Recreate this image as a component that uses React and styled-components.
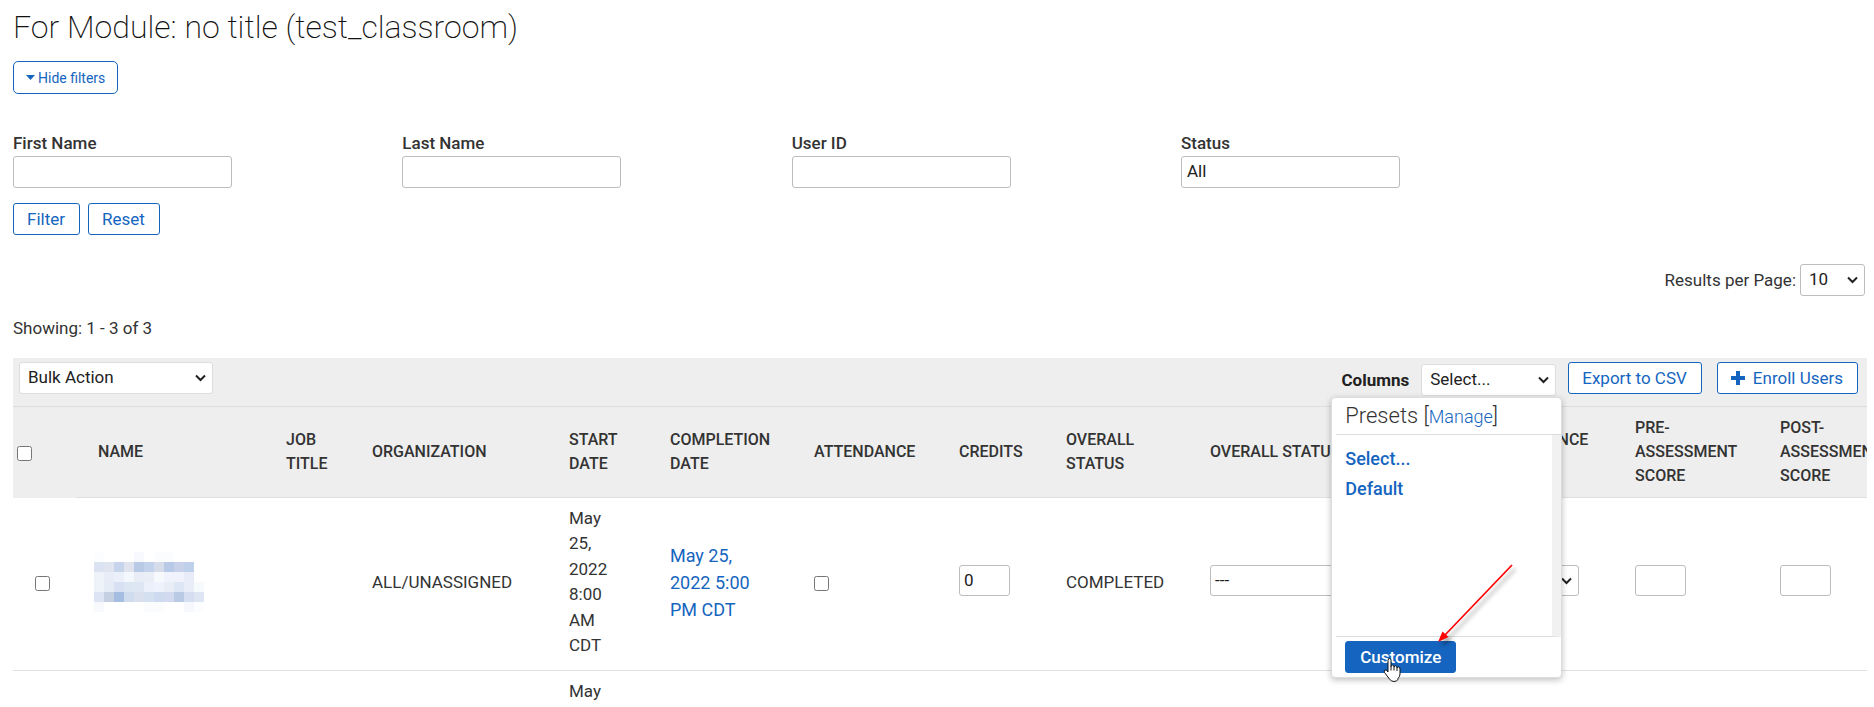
import React, { useState } from 'react'
import styled, { createGlobalStyle } from 'styled-components'

const blue = '#1565c0'

const GlobalStyle = createGlobalStyle`
  * {
    box-sizing: border-box;
  }

  body {
    margin: 0;
    background: #fff;
    color: #333;
    font-family: Roboto, sans-serif;
    font-size: 17px;
    line-height: 24px;
    overflow: hidden;
  }

  input, select, button {
    font-family: inherit;
    font-size: 17px;
    color: #212121;
  }
`

// shades of the blurred out learner name, one string for every block
const redacted = [
  ['#fcfdfe', '', '', '', '#f7f9fe', '', '#fbfcfe', '#fbfcfe', '', '', ''],
  ['#dbe3f3', '#dfe4f0', '#c6d5ec', '#e0e3ed', '#b8cae5', '#c2d2eb', '#d7dceb', '#b8cae7', '#c7d1ea', '#bfd0ea', ''],
  ['#eff2f8', '#e8ecf6', '#ebeff9', '#f3f8fc', '#e8edf6', '#eaeef7', '#f7f9fd', '#f0f3fb', '#f0f3fb', '#e8ebf8', ''],
  ['#edf3f9', '#e5ecf5', '#d7e1f3', '#dce6f2', '#dde6f2', '#ebf0fb', '#eef2fc', '#e9edf6', '#dce6f4', '#e9edf8', '#f6fafd'],
  ['#dde4f3', '#c5d0e2', '#a4bde0', '#cfdcee', '#dae0ee', '#d4dff0', '#cddaef', '#d1daee', '#b9cae5', '#d6dff1', '#dee5f3'],
  ['#f8f9fd', '', '', '', '', '#fbfcfe', '#fbfcfe', '', '', '#f7f8fd', '#fcfdfe'],
]

const columns = [
  { label: 'Name', width: 210, inset: true },
  { label: 'Job Title', width: 86 },
  { label: 'Organization', width: 197 },
  { label: 'Start Date', width: 101 },
  { label: 'Completion Date', width: 144 },
  { label: 'Attendance', width: 145 },
  { label: 'Credits', width: 107 },
  { label: 'Overall Status', width: 144 },
  { label: 'Overall Status', width: 277, wide: true },
  { label: 'Attendance Status', width: 148 },
  { label: 'Pre-Assessment Score', width: 145 },
  { label: 'Post-Assessment Score', width: 145 },
]

function App() {
  const [showFilters, setShowFilters] = useState(true)

  return (
    <Page>
      <GlobalStyle />
      <Title>For Module: no title (test_classroom)</Title>

      <ToggleButton type="button" onClick={() => setShowFilters(!showFilters)}>
        <Caret />
        {showFilters ? 'Hide filters' : 'Show filters'}
      </ToggleButton>

      {showFilters && (
        <Filters onSubmit={(e) => e.preventDefault()}>
          <Fields>
            <Field>
              <label htmlFor="first-name">First Name</label>
              <input id="first-name" type="text" />
            </Field>
            <Field>
              <label htmlFor="last-name">Last Name</label>
              <input id="last-name" type="text" />
            </Field>
            <Field>
              <label htmlFor="user-id">User ID</label>
              <input id="user-id" type="text" />
            </Field>
            <Field>
              <label htmlFor="status">Status</label>
              <select id="status">
                <option>All</option>
              </select>
            </Field>
          </Fields>
          <FilterButtons>
            <Button type="submit">Filter</Button>
            <Button type="reset">Reset</Button>
          </FilterButtons>
        </Filters>
      )}

      <PerPage>
        <label htmlFor="per-page">Results per Page:</label>
        <SelectBox $width="65px">
          <select id="per-page" defaultValue="10">
            <option>10</option>
            <option>25</option>
          </select>
          <Chevron />
        </SelectBox>
      </PerPage>

      <Showing>Showing: 1 - 3 of 3</Showing>

      <TablePanel>
        <Toolbar>
          <SelectBox $width="194px" $light>
            <select aria-label="Bulk Action">
              <option>Bulk Action</option>
            </select>
            <Chevron />
          </SelectBox>
          <Tools>
            <ColumnsPicker>
              <label htmlFor="columns">Columns</label>
              <SelectBox $width="135px" $light>
                <select id="columns">
                  <option>Select...</option>
                </select>
                <Chevron />
              </SelectBox>
              <PresetsMenu />
            </ColumnsPicker>
            <ButtonGroup>
              <Button type="button">Export to CSV</Button>
              <Button type="button">
                <PlusIcon />
                Enroll Users
              </Button>
            </ButtonGroup>
          </Tools>
        </Toolbar>

        <TableClip>
          <Table>
            <colgroup>
              <Col $width={63} />
              {columns.map((c, i) => <Col key={i} $width={c.width} />)}
            </colgroup>
            <thead>
              <tr>
                <HeadCheck><Checkbox type="checkbox" aria-label="Select all" /></HeadCheck>
                {columns.map((c, i) => <Th key={i} $wide={c.wide} $inset={c.inset}>{c.label}</Th>)}
              </tr>
            </thead>
            <tbody>
              <Row />
              <Row />
            </tbody>
          </Table>
        </TableClip>
      </TablePanel>
    </Page>
  )
}

export default App

function Row() {
  return (
    <tr>
      <CheckCell><Checkbox type="checkbox" aria-label="Select user" /></CheckCell>
      <NameCell><RedactedName /></NameCell>
      <Td />
      <Td>ALL/UNASSIGNED</Td>
      <DateCell>May 25, 2022 8:00 AM CDT</DateCell>
      <CompletionCell><a href="#completion">May 25, 2022 5:00 PM CDT</a></CompletionCell>
      <Td><Checkbox type="checkbox" aria-label="Attendance" /></Td>
      <InputCell><ScoreInput aria-label="Credits" defaultValue="0" /></InputCell>
      <Td>COMPLETED</Td>
      <InputCell>
        <SelectBox $width="250px" $tight>
          <select aria-label="Overall status">
            <option>---</option>
          </select>
          <Chevron />
        </SelectBox>
      </InputCell>
      <InputCell>
        <SelectBox $width="92px" $tight>
          <select aria-label="Attendance status">
            <option>---</option>
          </select>
          <Chevron />
        </SelectBox>
      </InputCell>
      <InputCell><ScoreInput aria-label="Pre-assessment score" /></InputCell>
      <InputCell><ScoreInput aria-label="Post-assessment score" /></InputCell>
    </tr>
  )
}

function PresetsMenu() {
  return (
    <Menu>
      <MenuTitle>
        Presets [<a href="#manage">Manage</a>]
      </MenuTitle>
      <MenuList>
        <li><a href="#select">Select...</a></li>
        <li><a href="#default">Default</a></li>
      </MenuList>
      <MenuFooter>
        <PrimaryButton type="button">Customize</PrimaryButton>
      </MenuFooter>
      <Pointer />
      <HandCursor />
    </Menu>
  )
}

function RedactedName() {
  return (
    <Blocks>
      {redacted.flat().map((shade, i) => <Block key={i} $shade={shade} />)}
    </Blocks>
  )
}

function Chevron() {
  return (
    <svg width="11" height="8" viewBox="0 0 11 8" aria-hidden="true">
      <path d="M1 1.5 L5.5 6 L10 1.5" fill="none" stroke="#212121" strokeWidth="2" />
    </svg>
  )
}

function Caret() {
  return (
    <svg width="9" height="5" viewBox="0 0 9 5" aria-hidden="true">
      <path d="M0 0 H9 L4.5 5 Z" fill={blue} />
    </svg>
  )
}

function PlusIcon() {
  return (
    <svg width="14" height="14" viewBox="0 0 14 14" aria-hidden="true">
      <path d="M5 0 H9 V5 H14 V9 H9 V14 H5 V9 H0 V5 H5 Z" fill={blue} />
    </svg>
  )
}

function Pointer() {
  return (
    <Arrow width="92" height="92" viewBox="0 0 92 92" aria-hidden="true">
      <path d="M79 5 L12 75" stroke="#f00" strokeWidth="1.7" />
      <path d="M5 82 L9.500 71.500 L15.500 77 Z" fill="#f00" />
    </Arrow>
  )
}

function HandCursor() {
  return (
    <Hand width="18" height="24" viewBox="0 0 18 24" aria-hidden="true">
      <path
        d="M5 14 V2.500 Q5 .5 6.500 .5 Q8 .5 8 2.500 V8.500 Q8.200 7 9.500 7 Q11 7 11 9 Q11.300 7.800 12.500 7.800 Q14 7.800 14 10 Q14.300 9 15.500 9 Q17 9.200 17 11 V16 Q17 18.500 15 20.500 V21.500 Q13.500 23.500 11 23.500 Q8 23.500 6.500 21 L1.500 14.500 Q.5 12.500 2 12 Q3.500 11.500 5 14 Z"
        fill="#fff"
        stroke="#111"
      />
      <path d="M8 8 V12.500 M11 9 V12.500 M14 10 V13" stroke="#111" />
    </Hand>
  )
}

const Page = styled.main`
  padding: 8px 7px 0 13px;
`

const Title = styled.h1`
  margin: 0;
  color: #111;
  font-size: 32px;
  font-weight: 200;
  line-height: 38px;
`

const ToggleButton = styled.button`
  display: flex;
  align-items: center;
  gap: 3px;
  height: 33px;
  margin-top: 15px;
  padding: 0 12px;
  background: #fff;
  border: 1px solid ${blue};
  border-radius: 5px;
  color: ${blue};
  font-size: 14px;
  cursor: pointer;
`

const Filters = styled.form`
  margin-top: 37px;
`

const Fields = styled.div`
  display: grid;
  grid-template-columns: repeat(4, 21%);
`

const Field = styled.div`
  display: flex;
  flex-direction: column;
  align-items: flex-start;

  label {
    font-weight: 500;
    line-height: 25px;
  }

  input, select {
    appearance: none;
    width: 219px;
    height: 32px;
    padding: 0 5px 2px;
    background: #fff;
    border: 1px solid #bdbdbd;
    border-radius: 3px;
  }
`

const FilterButtons = styled.div`
  display: flex;
  gap: 8px;
  margin-top: 15px;
`

const Button = styled.button`
  display: flex;
  align-items: center;
  gap: 8px;
  height: 32px;
  padding: 0 14px 0 13px;
  background: #fff;
  border: 1px solid ${blue};
  border-radius: 3px;
  color: ${blue};
  white-space: nowrap;
  cursor: pointer;
`

const PrimaryButton = styled(Button)`
  padding: 0 14px;
  background: ${blue};
  color: #fff;
  font-weight: 500;
`

const PerPage = styled.div`
  display: flex;
  justify-content: flex-end;
  align-items: center;
  gap: 4px;
  margin-top: 29px;
  padding-right: 2px;
`

const SelectBox = styled.div`
  position: relative;
  width: ${(p) => p.$width};

  select {
    display: block;
    appearance: none;
    width: 100%;
    height: ${(p) => (p.$tight ? '31px' : '32px')};
    padding: 0 ${(p) => (p.$tight ? '4px' : '8px')} 2px;
    background: #fff;
    border: 1px solid ${(p) => (p.$light ? '#ddd' : '#bdbdbd')};
    border-radius: 3px;
  }

  svg {
    position: absolute;
    top: 12px;
    right: 7px;
    pointer-events: none;
  }
`

const Showing = styled.p`
  margin: 20px 0 18px;
`

const TablePanel = styled.section`
  background: #eee;
`

const Toolbar = styled.div`
  display: flex;
  justify-content: space-between;
  align-items: flex-start;
  height: 48px;
  padding: 4px 9px 0 6px;
`

const Tools = styled.div`
  display: flex;
  align-items: flex-start;
  gap: 12px;
`

const ButtonGroup = styled.div`
  display: flex;
  gap: 15px;
`

const ColumnsPicker = styled.div`
  position: relative;
  display: flex;
  align-items: center;
  gap: 12px;
  margin-top: 2px;

  label {
    color: #212121;
    font-weight: 700;
  }
`

const Menu = styled.div`
  position: absolute;
  z-index: 2;
  top: 33px;
  right: -6px;
  width: 231px;
  padding-left: 4px;
  background: #fff;
  border: 1px solid #ddd;
  border-radius: 4px;
  box-shadow: 0 2px 6px rgba(0, 0, 0, 0.25);

  a {
    color: ${blue};
    text-decoration: none;
  }
`

const MenuTitle = styled.h2`
  margin: 0;
  padding-left: 9px;
  border-bottom: 1px solid #ddd;
  font-size: 22px;
  font-weight: 300;
  line-height: 35px;

  a {
    font-size: 18px;
  }
`

const MenuList = styled.ul`
  height: 202px;
  margin: 0;
  padding: 9px;
  border-right: 9px solid #f1f1f1;
  border-bottom: 1px solid #ddd;
  list-style: none;
  font-size: 18px;
  font-weight: 500;
  line-height: 30px;
`

const MenuFooter = styled.div`
  padding: 4px 9px;
`

const Arrow = styled.svg`
  position: absolute;
  right: 36px;
  bottom: 25px;
  fill: none;
  filter: drop-shadow(3px 4px 2px rgba(0, 0, 0, 0.4));
`

const Hand = styled.svg`
  position: absolute;
  left: 51px;
  bottom: -5px;
`

const TableClip = styled.div`
  overflow: hidden;
  border-top: 1px solid #ddd;
`

const Table = styled.table`
  table-layout: fixed;
  width: 1912px;
  border-collapse: collapse;
  background: #fff;
`

const Col = styled.col`
  width: ${(p) => p.$width}px;
`

const Th = styled.th`
  height: 90px;
  padding: 1px ${(p) => (p.$wide ? '16px' : '28px')} 0 ${(p) => (p.$inset ? '22px' : 0)};
  background: #eee;
  border-bottom: 1px solid #e0e0e0;
  font-size: 16px;
  font-weight: 500;
  text-align: left;
  text-transform: uppercase;
`

const HeadCheck = styled(Th)`
  padding-left: 4px;
  border-bottom-color: #eee;
`

const Td = styled.td`
  padding: 8px 0 11px;
  border-bottom: 1px solid #e0e0e0;
`

const CheckCell = styled(Td)`
  padding-left: 22px;
`

const NameCell = styled(Td)`
  padding-left: 18px;
`

const InputCell = styled(Td)`
  padding-bottom: 14px;
`

const DateCell = styled(Td)`
  padding: 8px 60px 11px 0;
  line-height: 1.5;
`

const CompletionCell = styled(Td)`
  padding-right: 50px;
  font-size: 18px;
  line-height: 27px;

  a {
    color: ${blue};
    text-decoration: none;
  }
`

const Checkbox = styled.input`
  display: block;
  width: 15px;
  height: 15px;
  margin: 3px 0 0;
`

const ScoreInput = styled.input`
  display: block;
  width: 51px;
  height: 31px;
  padding: 0 4px 2px;
  border: 1px solid #bdbdbd;
  border-radius: 3px;
`

const Blocks = styled.div`
  display: grid;
  grid-template-columns: repeat(11, 10px);
  grid-auto-rows: 10px;
`

const Block = styled.span`
  background: ${(p) => p.$shade || 'transparent'};
`
